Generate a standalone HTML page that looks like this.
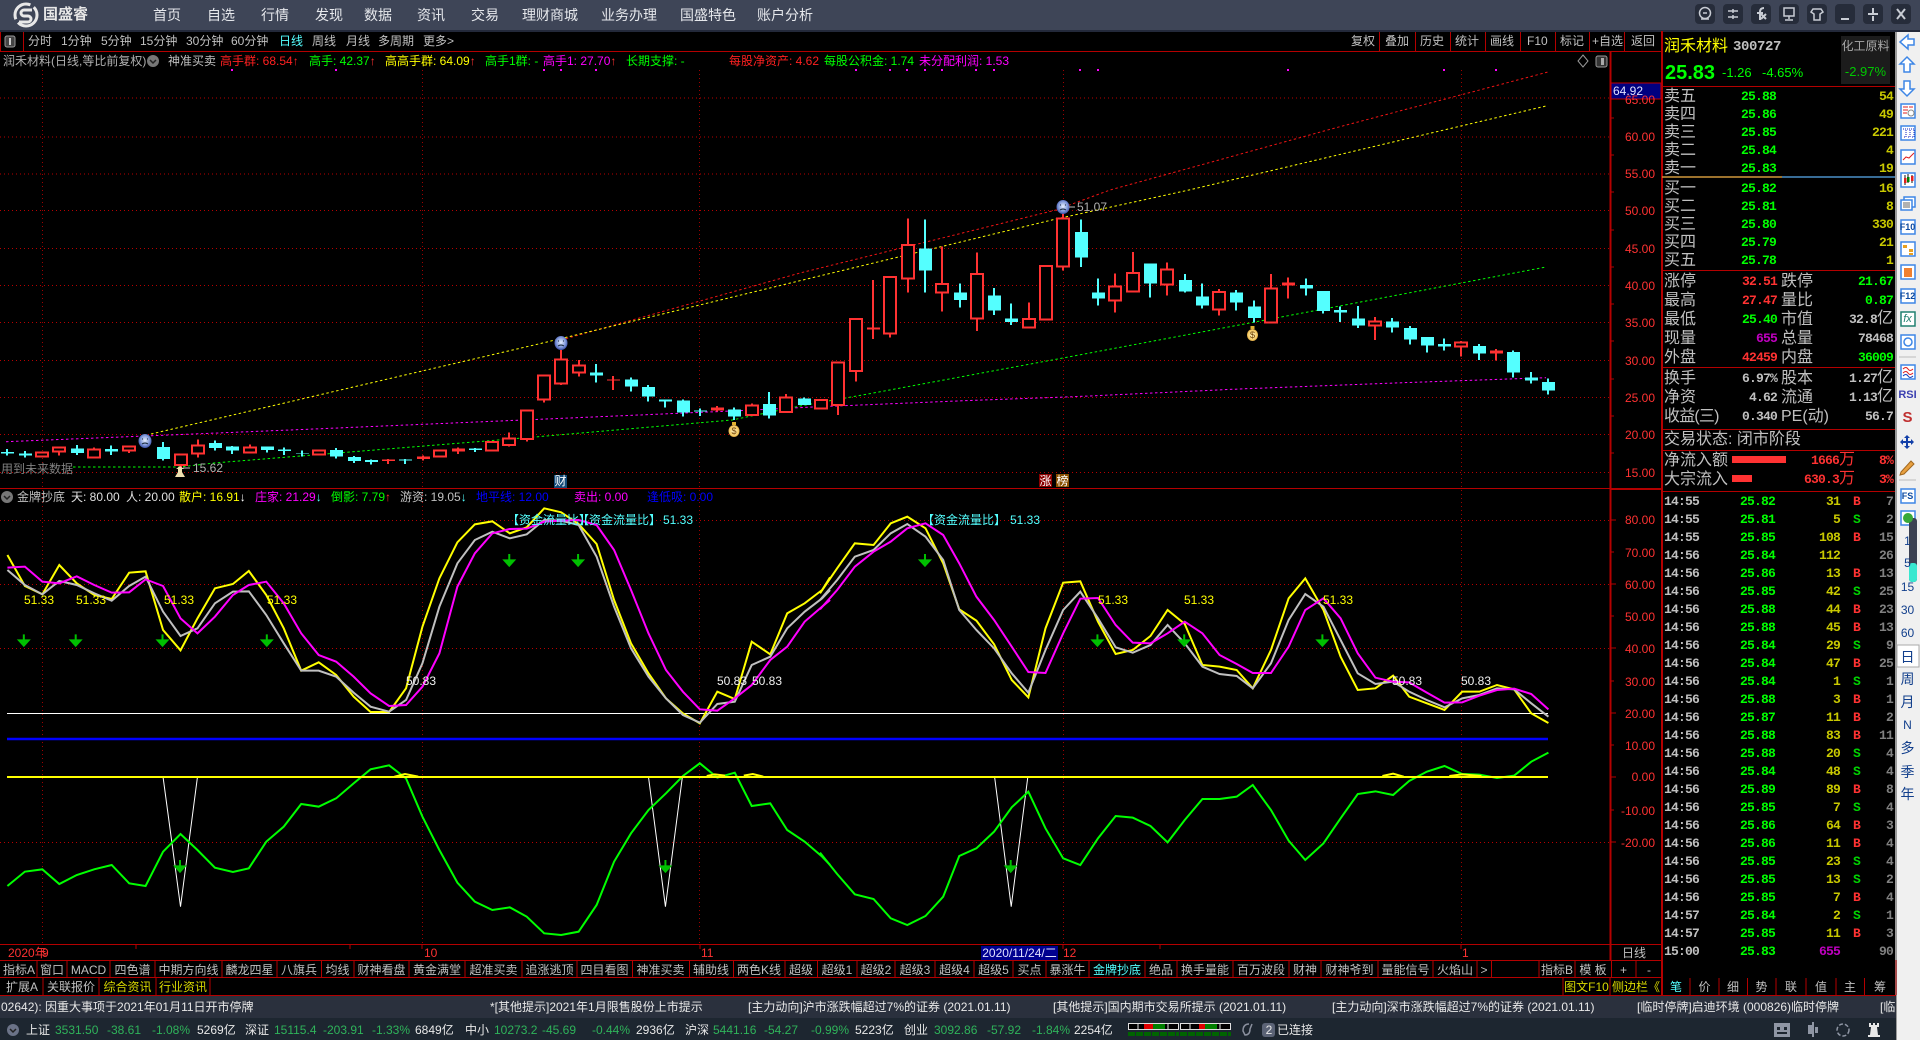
<!DOCTYPE html>
<html lang="zh"><head><meta charset="utf-8"><title>国盛睿</title>
<style>
html,body{margin:0;padding:0;background:#000;width:1920px;height:1040px;overflow:hidden}
body{position:relative;font:12px/16px "Liberation Sans","WenQuanYi Zen Hei","Noto Sans CJK SC",sans-serif;color:#c0c0c0}
svg{position:absolute;left:0;top:0}
.v *{vector-effect:non-scaling-stroke}
#r span{position:absolute;white-space:nowrap;display:block}
.m span{font-size:14px;color:#e6e8ec;top:7px}
.tb span{top:33px}
.ir span,.id span{top:53px}
.id span{top:489px}
.a span{color:#ff3232;right:265px;letter-spacing:0}
.l span{font-size:12px}
.t span{text-align:center;height:16px;line-height:16px}
.t1 span{top:962px}.t2 span{top:979px}
.tk span{top:999px;color:#e8e8e8}
.st span{top:1022px;color:#e8e8e8}
.st .g{color:#2fb35a}
.p,.k{position:absolute;left:0;top:1px;width:1920px;height:1039px}
.p span{font-family:"Liberation Mono","WenQuanYi Zen Hei",monospace;font-weight:700;font-size:13px;letter-spacing:-.8px;line-height:18px}
.p .c{font:16px/18px "Liberation Sans","WenQuanYi Zen Hei","Noto Sans CJK SC",sans-serif;color:#c0c0c0;letter-spacing:0;left:1664px}
.p .n{left:1741px;color:#0f0}
.p .y{right:27px;color:#c8c800}
.p .w{color:#c0c0c0}
.p .re{color:#ff3232}.p .gr{color:#0f0}
.p small{font:16px/0 "Liberation Sans","WenQuanYi Zen Hei",sans-serif;letter-spacing:0}
.k span{font-family:"Liberation Mono",monospace;font-weight:700;font-size:13px;letter-spacing:-.8px;line-height:18px}
.k .a1{left:1664px;color:#c0c0c0}
.k .a2{left:1740px;color:#0f0}
.k .a3{right:80px;color:#c8c800}
.k .a4{left:1853px;color:#ff3232}
.k .a5{left:1853px;color:#00d400}
.k .a6{right:27px;color:#808080}
.sd span{color:#123f8c;width:25px;text-align:center;left:1895px;font-size:14px}
</style></head>
<body>
<svg width="1920" height="1040" viewBox="0 0 1920 1040">
<defs>
<radialGradient id="sm" cx="50%" cy="45%" r="60%"><stop offset="0" stop-color="#e8f0ff"/><stop offset=".6" stop-color="#7e96d8"/><stop offset="1" stop-color="#2a3f9c"/></radialGradient>
<radialGradient id="mb" cx="50%" cy="50%" r="60%"><stop offset="0" stop-color="#fff6c8"/><stop offset=".7" stop-color="#f4c860"/><stop offset="1" stop-color="#a06010"/></radialGradient>
</defs>
<!-- chrome -->
<rect width="1920" height="30" fill="#3e4557"/>
<rect y="30" width="1920" height="2" fill="#23293a"/>
<rect x="1895" y="32" width="25" height="1008" fill="#f0f0f0"/>
<rect x="1895" y="32" width="2" height="1008" fill="#9a9a9a"/>
<rect y="995" width="1896" height="23" fill="#2a303d"/>
<rect y="1018" width="1896" height="22" fill="#1d2630"/>
<!-- grid -->
<path d="M0 98H1610M0 137H1610M0 174H1610M0 210.500H1610M0 248.500H1610M0 285.500H1610M0 322.500H1610M0 360.500H1610M0 397.500H1610M0 434.500H1610M0 472.500H1610M0 520.500H1610M0 584.500H1610M0 648.500H1610M0 842.500H1610" stroke="#b80000" stroke-dasharray="1 3" fill="none"/>
<path d="M42.500 70V945M422.500 70V945M699.500 70V945M1063.500 70V945M1461.500 70V945" stroke="#a00000" stroke-dasharray="1 3" fill="none"/>
<!-- dotted overlays -->
<g fill="none" stroke-width="1" stroke-dasharray="2.500 2.500">
<path d="M561 340L800 273L1056 210L1110 190L1335 128L1548 72" stroke="#f01414"/>
<path d="M151 434L544 342.700L800 280.700L1056 219L1189 190L1546 106" stroke="#ff0"/>
<path d="M73 467L180 467L214 463L523 438L732 420L800 406L868 394L1063 358L1239 325L1546 267" stroke="#0f0"/>
<path d="M6 441.700L145 436L314 429L523 420L732 411L820 406.700L964 400.700L1074 396.700L1239 389L1403 382.700L1546 377.700" stroke="#f0f"/>
</g>
<!-- candles left -->
<g class="v" transform="translate(0,340) scale(1,.33333)" shape-rendering="crispEdges">
<path fill="none" stroke="#ff3232" stroke-width="2" d="M42 337V353M59 322V347M94 322V353M129 318V339M181 341V385M198 298V352M250 313V340M319 330V345M388 357V372M423 347V362M440 330V352M458 323V342M492 304V335M509 277V320M527 212V305M544 107V188M561 30V135M579 60V110M613 108V150M717 198V215M752 190V228M786 162V218M821 178V205"/>
<path fill="#000" stroke="#ff3232" stroke-width="2" d="M36 338h12v12h-12zM53 322h12v13h-12zM88 328h12v25h-12zM123 320h12v12h-12zM175 343h12v32h-12zM192 317h12v24h-12zM244 323h12v15h-12zM313 332h12v12h-12zM434 332h12v18h-12zM486 306h12v26h-12zM503 296h12v19h-12zM521 212h12v85h-12zM538 107h12v71h-12zM555 58h12v72h-12zM573 77h12v20h-12zM746 197h12v28h-12zM780 173h12v43h-12zM815 180h12v25h-12z"/>
<path fill="#ff3232" d="M382 358h13v5h-13zM417 349h13v8h-13zM452 325h13v10h-13zM607 118h13v4h-13zM711 202h13v10h-13z"/>
<path fill="none" stroke="#54ffff" stroke-width="2" d="M7 327V347M25 333V352M77 315V345M111 316V345M163 306V362M215 301V332M232 318V342M267 319V338M284 322V345M302 331V350M336 324V356M354 348V369M371 358V374M405 357V372M475 324V336M596 72V128M631 112V155M648 135V185M665 178V203M683 178V230M700 205V228M734 202V240M769 156V235M804 173V195"/>
<path fill="#54ffff" d="M1 336h13v5h-13zM19 341h13v5h-13zM71 325h13v14h-13zM105 327h13v8h-13zM157 321h13v36h-13zM209 309h13v15h-13zM226 319h13v12h-13zM261 320h13v10h-13zM278 328h13v5h-13zM296 339h13v2h-13zM330 330h13v20h-13zM348 351h13v12h-13zM365 360h13v6h-13zM399 358h13v4h-13zM469 325h13v5h-13zM590 97h13v10h-13zM625 118h13v22h-13zM642 141h13v29h-13zM659 178h13v7h-13zM677 181h13v37h-13zM694 212h13v3h-13zM728 208h13v22h-13zM763 192h13v35h-13zM798 175h13v20h-13z"/>
</g>
<!-- candles right -->
<g class="v" transform="translate(0,190) scale(1,.33333)" shape-rendering="crispEdges">
<path fill="none" stroke="#ff3232" stroke-width="2" d="M838 518V675M856 385V575M873 270V447M890 260V443M908 85V308M942 170V365M977 187V423M1029 337V415M1063 70V242M1115 250V368M1133 186V305M1167 217V317M1219 297V377M1271 252V397M1288 262V326M1375 381V450M1461 453V500M1496 477V512"/>
<path fill="#000" stroke="#ff3232" stroke-width="2" d="M832 518h12v127h-12zM850 387h12v156h-12zM884 261h12v169h-12zM902 165h12v100h-12zM936 282h12v25h-12zM971 252h12v133h-12zM1023 387h12v25h-12zM1040 228h12v160h-12zM1057 85h12v145h-12zM1109 290h12v41h-12zM1127 249h12v55h-12zM1161 239h12v45h-12zM1213 306h12v52h-12zM1265 296h12v101h-12zM1369 395h12v11h-12zM1455 458h12v11h-12z"/>
<path fill="#ff3232" d="M867 412h13v6h-13zM1282 277h13v10h-13zM1490 481h13v10h-13z"/>
<path fill="none" stroke="#54ffff" stroke-width="2" d="M925 88V308M960 280V353M994 294V375M1011 340V405M1081 88V231M1098 265V347M1150 220V323M1185 252V308M1202 280V356M1236 300V362M1254 331V397M1306 265V317M1323 303V371M1340 350V396M1358 348V414M1392 384V428M1410 408V464M1427 441V488M1444 445V482M1479 462V510M1513 481V563M1531 546V581M1548 565V614"/>
<path fill="#54ffff" d="M919 175h13v67h-13zM954 307h13v23h-13zM988 316h13v46h-13zM1005 385h13v11h-13zM1075 126h13v77h-13zM1092 307h13v19h-13zM1144 220h13v61h-13zM1179 270h13v35h-13zM1196 319h13v28h-13zM1230 307h13v31h-13zM1248 349h13v35h-13zM1300 285h13v11h-13zM1317 303h13v60h-13zM1334 360h13v8h-13zM1352 385h13v22h-13zM1386 394h13v19h-13zM1404 414h13v35h-13zM1421 441h13v26h-13zM1438 462h13v8h-13zM1473 468h13v23h-13zM1507 486h13v62h-13zM1525 563h13v8h-13zM1542 576h13v26h-13z"/>
</g>
<!-- markers -->
<ellipse cx="145" cy="441" rx="6.500" ry="7" fill="url(#sm)"/><path d="M142 439h1M147 439h1M142 444q3-2 6 0" stroke="#123" fill="none"/>
<ellipse cx="561" cy="343" rx="6.500" ry="7" fill="url(#sm)"/><path d="M558 341h1M563 341h1M558 346q3-2 6 0" stroke="#123" fill="none"/>
<ellipse cx="1063" cy="207" rx="6.500" ry="7" fill="url(#sm)"/><path d="M1060 205h1M1065 205h1M1060 210q3-2 6 0" stroke="#123" fill="none"/>
<ellipse cx="734" cy="431" rx="5.500" ry="6" fill="url(#mb)"/><rect x="732" y="422" width="4" height="3" fill="#e0b030"/><text x="734" y="434" font-size="9" text-anchor="middle" fill="#704000" font-family="Liberation Sans">$</text>
<ellipse cx="1252.500" cy="335" rx="5.500" ry="6" fill="url(#mb)"/><rect x="1250.500" y="326" width="4" height="3" fill="#e0b030"/><text x="1252.500" y="338" font-size="9" text-anchor="middle" fill="#704000" font-family="Liberation Sans">$</text>
<path d="M175 477h10l-3-5v-3h2l-4-3-4 3h2v3z" fill="#f0e0b0"/>
<path d="M183 468h7" stroke="#c0c0c0"/>
<path d="M1069 207h6" stroke="#c0c0c0"/>
<rect x="554" y="475" width="13" height="13" fill="#134a78"/>
<rect x="1039" y="474" width="13" height="13" fill="#8a0000"/>
<rect x="1056" y="474" width="13" height="13" fill="#8a5000"/>
<!-- indicator lines -->
<path d="M7 713.500H1548" stroke="#fff"/>
<path d="M7 739H1548" stroke="#0000ff" stroke-width="2.500"/>
<g class="v" transform="translate(0,500) scale(.52938,.33333)" fill="none">
<path stroke="#fff" d="M308 831L341 1220L373 831M1225 831L1257 1220L1289 831"/>
<path stroke="#0f0" stroke-width="2" d="M14 1158L47 1115L80 1108L112 1152L145 1125L178 1108L211 1095L244 1150L275 1158L308 1055L341 1002L373 1050L406 1103L440 1116L470 1105L503 1025L536 980L569 912L602 920L635 895L668 850L700 808L735 796L767 835L798 950L830 1050L864 1148L897 1205L930 1230L963 1222L995 1250L1028 1300L1060 1305L1093 1295L1127 1215L1160 1085L1192 1000L1225 930L1258 880L1290 828L1322 790L1355 833L1388 818L1420 918L1455 910L1487 990L1520 1025L1553 1070L1568 1095"/>
<path stroke="#ff0" stroke-width="2" d="M14 165L47 258L80 283L112 195L145 250L178 285L211 297L244 218L275 214L308 390L341 451L373 355L406 265L440 252L470 213L503 285L536 385L569 512L602 487L635 525L668 590L700 636L735 636L767 565L798 380L830 235L864 127L897 73L930 64L963 100L995 82L1028 25L1060 37L1093 72L1127 132L1160 300L1192 430L1225 520L1258 595L1290 640L1322 670L1355 575L1388 597L1420 425L1455 463L1487 340L1520 310L1553 270L1568 232"/>
<path stroke="#c0c0c0" stroke-width="2" d="M14 210L47 255L80 283L112 243L145 255L178 280L211 302L244 258L275 230L308 335L341 408L373 385L406 310L440 275L470 274L503 345L536 430L569 512L602 512L635 530L668 578L700 620L735 635L767 600L798 490L830 320L864 190L897 120L930 95L963 115L995 103L1028 60L1060 62L1093 75L1127 170L1160 320L1192 445L1225 530L1258 595L1290 645L1322 668L1355 612L1388 605L1420 495L1455 470L1487 385L1520 335L1553 295L1568 270"/>
<path stroke="#f0f" stroke-width="2" d="M14 203L47 200L80 245L112 250L145 229L178 255L211 278L244 277L275 238L308 258L341 355L373 400L406 350L440 285L470 255L503 245L536 310L569 400L602 465L635 485L668 530L700 580L735 618L767 615L798 560L830 460L864 260L897 160L930 100L963 87L995 86L1028 65L1060 62L1093 60L1127 75L1160 150L1192 270L1225 400L1258 510L1290 575L1322 628L1355 632L1388 595L1420 555L1455 480L1487 440L1520 365L1553 320L1568 300"/>
<path stroke="#ff0" stroke-width="2" d="M745 830L765 822L790 830M1335 828L1350 823L1370 827M1405 827L1422 822L1442 830"/>
<path fill="#00c000" stroke="#00c000" stroke-width="2" d="M45 403V420M36 421H54L45 437ZM143 403V420M134 421H152L143 437ZM307 403V420M298 421H316L307 437ZM504 403V420M495 421H513L504 437ZM962 162V180M953 181H971L962 197ZM1092 162V180M1083 181H1101L1092 197ZM340 1080V1098M331 1099H349L340 1115ZM1257 1080V1098M1248 1099H1266L1257 1115Z"/>
</g>
<g class="v" transform="translate(820,500) scale(.53560,.33333)" fill="none">
<path stroke="#fff" d="M326 831L357 1220L388 831"/>
<path stroke="#0f0" stroke-width="2" d="M0 1058L32 1122L65 1183L100 1197L132 1255L163 1275L197 1248L230 1190L260 1068L292 1045L325 995L358 922L389 875L421 985L454 1075L486 1095L519 1015L552 948L584 953L617 978L649 1027L681 960L714 897L746 897L778 890L808 855L842 930L875 1022L906 1080L940 1030L972 955L1004 882L1037 874L1070 885L1100 843L1133 815L1166 798L1199 822L1231 824L1264 834L1296 827L1328 785L1360 758"/>
<path stroke="#ff0" stroke-width="2" d="M0 280L32 205L65 130L100 135L132 70L163 50L197 85L230 190L260 328L292 362L325 433L358 540L389 592L421 385L454 248L486 244L519 365L552 462L584 450L617 408L649 330L681 372L714 495L746 500L778 510L808 565L842 450L875 295L906 235L940 330L972 470L1004 570L1037 565L1070 527L1100 590L1133 610L1166 630L1199 575L1231 575L1264 555L1296 568L1328 640L1360 669"/>
<path stroke="#c0c0c0" stroke-width="2" d="M0 300L32 240L65 170L100 150L132 100L163 72L197 110L230 180L260 330L292 390L325 445L358 520L389 578L421 450L454 330L486 275L519 355L552 442L584 458L617 435L649 375L681 430L714 500L746 522L778 528L808 565L842 490L875 360L906 282L940 320L972 420L1004 520L1037 552L1070 545L1100 575L1133 600L1166 622L1199 595L1231 585L1264 565L1296 568L1328 610L1360 650"/>
<path stroke="#f0f" stroke-width="2" d="M0 328L32 270L65 200L100 155L132 125L163 85L197 70L230 105L260 190L292 290L325 360L358 440L389 516L421 519L454 400L486 296L519 294L552 375L584 428L617 430L649 400L681 365L714 400L746 465L778 492L808 519L842 519L875 440L906 330L940 295L972 355L1004 460L1037 533L1070 545L1100 547L1133 578L1166 608L1199 607L1231 587L1264 570L1296 566L1328 582L1360 628"/>
<path stroke="#ff0" stroke-width="2" d="M1050 828L1070 821L1090 830M1175 828L1199 823L1235 828"/>
<path fill="#00c000" stroke="#00c000" stroke-width="2" d="M196 162V180M187 181H205L196 197ZM518 403V420M509 421H527L518 437ZM680 403V420M671 421H689L680 437ZM938 403V420M929 421H947L938 437ZM356 1080V1098M347 1099H365L356 1115Z"/>
</g>
<path d="M7 777H1548" stroke="#ff0" stroke-width="2"/>
<!-- red frame -->
<g stroke="#b40000" fill="none">
<path d="M0 51.500H1662M0 488.500H1610M0 944.500H1662M0 960.500H1662M0 977.500H1662M0 995.500H1896" />
<path d="M1610.500 51V960M1662 31V995" stroke-width="2"/>
<path d="M1610 489H1661" stroke-width="2"/>
<path d="M1662 86.500H1895M1662 270.500H1895M1662 367.500H1895M1662 429.500H1895M1662 450.500H1895M1662 491.500H1895"/>
<path d="M0.500 32V51M23.500 32V51" />
<path d="M1610 118H1614M1610 155H1614M1610 192H1614M1610 230H1614M1610 267H1614M1610 304H1614M1610 341H1614M1610 379H1614M1610 416H1614M1610 453H1614M1610 552H1614M1610 616H1614M1610 681H1614M1610 745H1614M1610 810H1614M1610 520H1616M1610 584H1616M1610 648H1616M1610 713H1616M1610 777H1616M1610 842H1616"/>
<path d="M1379.500 32V51M1415.500 32V51M1450.500 32V51M1485.500 32V51M1520.500 32V51M1555.500 32V51M1589.500 32V51M1624.500 32V51" />
<path d="M37 961V977M67 961V977M110 961V977M155 961V977M222 961V977M277 961V977M321.500 961V977M354 961V977M409 961V977M465 961V977M522 961V977M577 961V977M632.500 961V977M689.500 961V977M733.500 961V977M785 961V977M817.500 961V977M857 961V977M895 961V977M935 961V977M974 961V977M1013 961V977M1046 961V977M1089 961V977M1145 961V977M1177 961V977M1233 961V977M1289 961V977M1321 961V977M1378 961V977M1433 961V977M1477 961V977M1491.500 961V977M1539 961V977M1575 961V977M1611.500 961V977M1636 961V977"/>
<path d="M43 978V995M99 978V995M156 978V995M210 978V995M1563 978V995M1610 978V995M1690 978V995M1719 978V995M1747.500 978V995M1776 978V995M1806 978V995M1836 978V995M1864.500 978V995M1896 960V995"/>
<path d="M136 945V949M350 945V949M422 945V949M700 945V949M1063 945V949M1160 945V949M1461 945V949"/>
</g>
<rect x="1611" y="83" width="50" height="16" fill="#000080" stroke="#c00000"/>
<rect x="981" y="946" width="77" height="14" fill="#000090"/>
<path d="M1662 177H1782" stroke="#d0983c" stroke-width="1.500"/><path d="M1782 177H1895" stroke="#4a8fc8" stroke-width="1.500"/>
<rect x="1841" y="36" width="49" height="48" fill="#1c1c1c"/>
<rect x="1732" y="456" width="54" height="7" fill="#ff3232"/>
<rect x="1732" y="475" width="20" height="7" fill="#ff3232"/>
<!-- toolbar left icon / chart icons -->
<rect x="5" y="36" width="10" height="11" rx="2" fill="#444" stroke="#999"/><rect x="9" y="38" width="2" height="7" fill="#ccc"/>
<path d="M1583 55l5 6-5 6-5-6z" fill="none" stroke="#999"/>
<rect x="1596" y="56" width="11" height="11" rx="2" fill="#333" stroke="#999"/><rect x="1601" y="58" width="3" height="7" fill="#aaa"/>
<circle cx="153" cy="61" r="6" fill="#777"/><path d="M150 60l3 3 3-3" stroke="#222" stroke-width="1.500" fill="none"/>
<circle cx="7" cy="497" r="6" fill="#777"/><path d="M4 496l3 3 3-3" stroke="#222" stroke-width="1.500" fill="none"/>
<path fill="#f0f" d="M231 69h2v2h-2zM335 69h2v2h-2zM543 69h2v2h-2zM560 69h2v2h-2zM595 69h2v2h-2zM855 69h2v2h-2zM889 69h2v2h-2zM906 69h2v2h-2zM924 69h2v2h-2zM941 69h2v2h-2zM975 69h2v2h-2zM993 69h2v2h-2zM1079 69h2v2h-2zM1097 69h2v2h-2zM1287 69h2v2h-2zM1443 69h2v2h-2zM1495 69h2v2h-2z"/>
<!-- logo -->
<circle cx="26" cy="15" r="11" fill="none" stroke="#e8e8e8" stroke-width="3" stroke-dasharray="26 4"/>
<path d="M32 10H24a3 3 0 0 0 0 6h4a3 3 0 0 1 0 6H19" fill="none" stroke="#e8e8e8" stroke-width="3"/>
<!-- window buttons -->
<g fill="#262c3a">
<rect x="1695" y="4" width="20" height="20" rx="4"/><rect x="1723" y="4" width="20" height="20" rx="4"/><rect x="1751" y="4" width="20" height="20" rx="4"/><rect x="1779" y="4" width="20" height="20" rx="4"/><rect x="1807" y="4" width="20" height="20" rx="4"/><rect x="1835" y="4" width="20" height="20" rx="4"/><rect x="1863" y="4" width="20" height="20" rx="4"/><rect x="1891" y="4" width="20" height="20" rx="4"/>
</g>
<g fill="none" stroke="#c8ccd4" stroke-width="1.500">
<circle cx="1705" cy="13" r="5.500"/><path d="M1703 13h4M1701 19h8"/>
<path d="M1728 11h10M1733 9v4M1728 17h10M1733 15v4"/>
<path d="M1764 8q-4 0-4 4v8M1757 13h6M1761 14l5 5M1766 14l-5 5" stroke-width="2"/>
<rect x="1784" y="8" width="10" height="8"/><path d="M1789 16v3M1785 20h8"/>
<path d="M1813 9h8l2 3-3 2v6h-6v-6l-3-2z"/>
<path d="M1841 19h8" stroke-width="2"/>
<path d="M1873 8v6M1868 14h5M1873 16v5M1873 14h5" stroke-width="2"/>
<path d="M1897 9l8 10M1905 9l-8 10" stroke-width="2"/>
</g>
<!-- status boxes -->
<g stroke="#e0e0e0" fill="#000">
<rect x="1128.500" y="1023.500" width="50" height="6"/><rect x="1180.500" y="1023.500" width="50" height="6"/>
</g>
<path d="M1138 1023v7M1148 1023v7M1158 1023v7M1168 1023v7M1190 1023v7M1200 1023v7M1210 1023v7M1220 1023v7" stroke="#e0e0e0"/>
<rect x="1144" y="1024" width="9" height="5" fill="#e00000"/><rect x="1153" y="1024" width="12" height="5" fill="#008000"/>
<rect x="1199" y="1024" width="6" height="5" fill="#e00000"/><rect x="1205" y="1024" width="12" height="5" fill="#008000"/>
<path d="M1128 1034H1179M1180 1034H1231" stroke="#006400" stroke-width="4" stroke-dasharray="7 1"/>
<circle cx="13" cy="1030" r="6" fill="#6b7388"/><path d="M10 1029l3 3 3-3" stroke="#222" stroke-width="1.500" fill="none"/>
<path d="M1249 1024q-6 0-6 7l2 4q5 0 5-6l2-5" fill="none" stroke="#8a909e" stroke-width="1.500"/>
<rect x="1262" y="1023" width="13" height="14" rx="3" fill="#5b6376"/>
<g fill="#8f96a4">
<path d="M1774 1023h16v14h-16zM1777 1027h3v3h-3zM1784 1027h3v3h-3zM1777 1032h10v2h-10z" fill-rule="evenodd"/>
<path d="M1808 1025h4v-3h2v15h-2v-3h-4zM1815 1027h3v6h-3z"/>
</g>
<circle cx="1843" cy="1030" r="6" fill="none" stroke="#8f96a4" stroke-width="1.500" stroke-dasharray="4 2"/>
<path d="M1869 1023h2v2h2v-2h2v2h2v-2h2v4h-2l1 8h2v2h-12v-2h2l1-8h-2z" fill="#e8e8e8"/>
<!-- sidebar icons -->
<g fill="#fff" stroke="#3d86e6" stroke-width="1.500">
<path d="M1900 42l8-7v4h6v6h-6v4z"/>
<path d="M1907 57l7 7h-4v8h-6v-8h-4z"/>
<path d="M1904 81h6v8h4l-7 7-7-7h4z"/>
<rect x="1901" y="104" width="14" height="14"/>
<rect x="1901" y="126" width="14" height="14"/>
<rect x="1901" y="150" width="14" height="14"/>
<rect x="1901" y="173" width="14" height="14"/>
<rect x="1904" y="197" width="11" height="10"/><rect x="1901" y="200" width="11" height="10"/>
<rect x="1901" y="220" width="14" height="14"/>
<rect x="1901" y="242" width="14" height="14"/>
<rect x="1901" y="265" width="14" height="14"/>
<rect x="1901" y="289" width="14" height="14"/>
<rect x="1901" y="312" width="14" height="14" stroke="#208070"/>
<rect x="1901" y="335" width="14" height="14"/>
<circle cx="1908" cy="342" r="4" fill="none" stroke="#3d86e6"/>
<rect x="1901" y="365" width="14" height="14"/>
<rect x="1901" y="489" width="14" height="14"/>
<rect x="1901" y="511" width="14" height="14"/>
</g>
<path d="M1903 107h5M1903 110h5M1903 113h4M1909 107h4" stroke="#e02020"/><circle cx="1911" cy="113" r="3" fill="none" stroke="#888"/>
<path d="M1903 129h3v8h-3M1907 129h3v8h-3M1911 129h3v8h-3" stroke="#1020c0" fill="none" stroke-dasharray="1 1"/>
<path d="M1903 160l3-3 3 1 5-5" stroke="#e02020" fill="none"/>
<path d="M1905 175v10M1908 174v9M1912 175v8" stroke="#111"/><rect x="1904" y="178" width="2.500" height="5" fill="#e02020"/><rect x="1907" y="177" width="2.500" height="5" fill="#008000"/><rect x="1911" y="176" width="2.500" height="5" fill="#e02020"/>
<path d="M1903 203h7M1903 205h7M1903 207h7" stroke="#666"/>
<rect x="1903" y="245" width="4" height="3" fill="#e8a020"/><rect x="1909" y="249" width="4" height="3" fill="#e8a020"/><rect x="1909" y="253" width="4" height="2" fill="#e8a020"/>
<rect x="1904" y="268" width="8" height="9" fill="#f08030"/>
<path d="M1903 369q3-3 5 0t5 0M1903 373q3-3 5 0t5 0" stroke="#e02020" fill="none"/><path d="M1903 376q3-3 5 0t5 0" stroke="#1040c0" fill="none"/>
<path d="M1899 357h17M1899 480h17" stroke="#bbb"/>
<path d="M1907 435l3 3h-2v3h3v-2l3 3-3 3v-2h-3v3h2l-3 3-3-3h2v-3h-3v2l-3-3 3-3v2h3v-3h-2z" fill="#123fa8"/>
<path d="M1901 472l10-11 3 3-10 10-4 1z" fill="#e8a040" stroke="#a06820"/>
<rect x="1909" y="518" width="8" height="64" rx="3" fill="#3b4152"/>
<rect x="1909" y="563" width="8" height="19" rx="3" fill="#38e8d0"/>
<circle cx="1908" cy="518" r="5" fill="#38a838"/>
<rect x="1897" y="645" width="22" height="22" fill="#fff" stroke="#aaa"/>
</svg>
<div id="r">
<div class="m">
<span style="left:43px;top:7px;font-weight:700;font-size:15px;color:#e8e8e8">国盛睿</span>
<span style="left:153px">首页</span><span style="left:207px">自选</span><span style="left:261px">行情</span><span style="left:315px">发现</span><span style="left:364px">数据</span><span style="left:417px">资讯</span><span style="left:471px">交易</span><span style="left:522px">理财商城</span><span style="left:601px">业务办理</span><span style="left:680px">国盛特色</span><span style="left:757px">账户分析</span>
</div>
<div class="tb">
<span style="left:28px">分时</span><span style="left:61px">1分钟</span><span style="left:101px">5分钟</span><span style="left:140px">15分钟</span><span style="left:186px">30分钟</span><span style="left:231px">60分钟</span><span style="left:279px;color:#54ffff">日线</span><span style="left:312px">周线</span><span style="left:346px">月线</span><span style="left:378px">多周期</span><span style="left:423px">更多&gt;</span>
<span style="left:1351px">复权</span><span style="left:1385px">叠加</span><span style="left:1420px">历史</span><span style="left:1455px">统计</span><span style="left:1490px">画线</span><span style="left:1527px">F10</span><span style="left:1560px">标记</span><span style="left:1592px">+自选</span><span style="left:1631px">返回</span>
</div>
<div class="ir">
<span style="left:3px;color:#b0b0b0">润禾材料(日线,等比前复权)</span><span style="left:168px">神准买卖</span>
<span style="left:220px;color:#ff2020">高手群: 68.54↑</span><span style="left:309px;color:#0f0">高手: 42.37<b style="color:#ff3232">↑</b></span><span style="left:385px;color:#ff0">高高手群: 64.09<b style="color:#ff3232">↑</b></span><span style="left:485px;color:#0f0">高手1群: -</span><span style="left:543px;color:#f0f">高手1: 27.70<b style="color:#ff3232">↑</b></span><span style="left:626px;color:#0f0">长期支撑: -</span>
<span style="left:729px;color:#ff2020">每股净资产: 4.62</span><span style="left:824px;color:#0f0">每股公积金: 1.74</span><span style="left:919px;color:#f0f">未分配利润: 1.53</span>
</div>
<div class="id">
<span style="left:17px">金牌抄底</span><span style="left:71px;color:#e0e0e0">天: 80.00</span><span style="left:126px;color:#e0e0e0">人: 20.00</span>
<span style="left:179px;color:#ff0">散户: 16.91<b style="color:#fff">↓</b></span><span style="left:255px;color:#f0f">庄家: 21.29<b style="color:#54ffff">↓</b></span><span style="left:331px;color:#0f0">倒影: 7.79<b style="color:#ff3232">↑</b></span><span style="left:400px;color:#c0c0c0">游资: 19.05<b style="color:#54ffff">↓</b></span><span style="left:476px;color:#0000ff">地平线: 12.00</span><span style="left:574px;color:#f0f">卖出: 0.00</span><span style="left:647px;color:#0000ff">逢低吸: 0.00</span>
</div>
<div class="l">
<span style="left:1px;top:461px;color:#808080">用到未来数据</span>
<span style="left:193px;top:460px;color:#b0b0b0">15.62</span>
<span style="left:1077px;top:199px;color:#b0b0b0">51.07</span>
<span style="left:554px;top:473px;color:#fff;width:13px;text-align:center">财</span>
<span style="left:1039px;top:473px;color:#fff;width:13px;text-align:center">涨</span>
<span style="left:1056px;top:473px;color:#fff;width:13px;text-align:center">榜</span>
<span style="left:1613px;top:83px;color:#e0e0ff">64.92</span>
<span style="left:24px;top:592px;color:#ff0">51.33</span><span style="left:76px;top:592px;color:#ff0">51.33</span><span style="left:164px;top:592px;color:#ff0">51.33</span><span style="left:267px;top:592px;color:#ff0">51.33</span><span style="left:1098px;top:592px;color:#ff0">51.33</span><span style="left:1184px;top:592px;color:#ff0">51.33</span><span style="left:1323px;top:592px;color:#ff0">51.33</span>
<span style="left:406px;top:673px;color:#f0f0f0">50.83</span><span style="left:717px;top:673px;color:#f0f0f0">50.83</span><span style="left:752px;top:673px;color:#f0f0f0">50.83</span><span style="left:1392px;top:673px;color:#f0f0f0">50.83</span><span style="left:1461px;top:673px;color:#f0f0f0">50.83</span>
<span style="left:507px;top:512px;color:#54ffff">【资金流量比】</span><span style="left:577px;top:512px;color:#54ffff">【资金流量比】</span><span style="left:663px;top:512px;color:#54ffff">51.33</span><span style="left:922px;top:512px;color:#54ffff">【资金流量比】</span><span style="left:1010px;top:512px;color:#54ffff">51.33</span>
</div>
<div class="a">
<span style="top:92px">65.00</span><span style="top:129px">60.00</span><span style="top:166px">55.00</span><span style="top:203px">50.00</span><span style="top:241px">45.00</span><span style="top:278px">40.00</span><span style="top:315px">35.00</span><span style="top:353px">30.00</span><span style="top:390px">25.00</span><span style="top:427px">20.00</span><span style="top:465px">15.00</span>
<span style="top:512px">80.00</span><span style="top:545px">70.00</span><span style="top:577px">60.00</span><span style="top:609px">50.00</span><span style="top:641px">40.00</span><span style="top:674px">30.00</span><span style="top:706px">20.00</span><span style="top:738px">10.00</span><span style="top:769px">0.00</span><span style="top:803px">-10.00</span><span style="top:835px">-20.00</span>
</div>
<div class="l" style="color:#ff3232">
<span style="left:8px;top:945px;color:#ff3232">2020年</span><span style="left:42px;top:945px;color:#ff3232">9</span><span style="left:424px;top:945px;color:#ff3232">10</span><span style="left:701px;top:945px;color:#ff3232">11</span><span style="left:1063px;top:945px;color:#ff3232">12</span><span style="left:1462px;top:945px;color:#ff3232">1</span>
<span style="left:981px;top:945px;color:#e0e0ff;width:77px;text-align:center">2020/11/24/二</span>
<span style="left:1622px;top:945px;color:#c0c0c0">日线</span>
</div>
<div class="t t1">
<span style="left:1px;width:36px">指标A</span><span style="left:37px;width:30px">窗口</span><span style="left:67px;width:43px">MACD</span><span style="left:110px;width:45px">四色谱</span><span style="left:155px;width:67px">中期方向线</span><span style="left:222px;width:55px">麟龙四星</span><span style="left:277px;width:44px">八旗兵</span><span style="left:321px;width:33px">均线</span><span style="left:354px;width:55px">财神看盘</span><span style="left:409px;width:56px">黄金满堂</span><span style="left:465px;width:57px">超准买卖</span><span style="left:522px;width:55px">追涨逃顶</span><span style="left:577px;width:55px">四目看图</span><span style="left:632px;width:57px">神准买卖</span><span style="left:689px;width:44px">辅助线</span><span style="left:733px;width:52px">两色K线</span><span style="left:785px;width:32px">超级</span><span style="left:817px;width:40px">超级1</span><span style="left:857px;width:38px">超级2</span><span style="left:895px;width:40px">超级3</span><span style="left:935px;width:39px">超级4</span><span style="left:974px;width:39px">超级5</span><span style="left:1013px;width:33px">买点</span><span style="left:1046px;width:43px">暴涨牛</span><span style="left:1089px;width:56px;color:#54ffff">金牌抄底</span><span style="left:1145px;width:32px">绝品</span><span style="left:1177px;width:56px">换手量能</span><span style="left:1233px;width:56px">百万波段</span><span style="left:1289px;width:32px">财神</span><span style="left:1321px;width:57px">财神爷到</span><span style="left:1378px;width:55px">量能信号</span><span style="left:1433px;width:44px">火焰山</span><span style="left:1477px;width:14px">&gt;</span><span style="left:1539px;width:36px">指标B</span><span style="left:1575px;width:36px">模 板</span><span style="left:1611px;width:25px">+</span><span style="left:1636px;width:26px">-</span>
</div>
<div class="t t2">
<span style="left:1px;width:42px">扩展A</span><span style="left:43px;width:56px">关联报价</span><span style="left:99px;width:57px;color:#d8d800">综合资讯</span><span style="left:156px;width:54px;color:#d8d800">行业资讯</span><span style="left:1563px;width:47px;color:#d8d800">图文F10</span><span style="left:1610px;width:52px;color:#d8d800">侧边栏《</span><span style="left:1662px;width:28px;color:#54ffff">笔</span><span style="left:1690px;width:29px">价</span><span style="left:1719px;width:28px">细</span><span style="left:1747px;width:29px">势</span><span style="left:1776px;width:30px">联</span><span style="left:1806px;width:30px">值</span><span style="left:1836px;width:28px">主</span><span style="left:1864px;width:32px">筹</span>
</div>
<div class="tk">
<span style="left:1px">02642): 因重大事项于2021年01月11日开市停牌</span><span style="left:490px">*[其他提示]2021年1月限售股份上市提示</span><span style="left:748px">[主力动向]沪市涨跌幅超过7%的证券 (2021.01.11)</span><span style="left:1053px">[其他提示]国内期市交易所提示 (2021.01.11)</span><span style="left:1332px">[主力动向]深市涨跌幅超过7%的证券 (2021.01.11)</span><span style="left:1637px">[临时停牌]启迪环境 (000826)临时停牌</span><span style="left:1880px">[临</span>
</div>
<div class="st">
<span style="left:26px">上证</span><span class="g" style="left:55px">3531.50</span><span class="g" style="left:107px">-38.61</span><span class="g" style="left:152px">-1.08%</span><span style="left:197px">5269亿</span>
<span style="left:245px">深证</span><span class="g" style="left:274px">15115.4</span><span class="g" style="left:323px">-203.91</span><span class="g" style="left:372px">-1.33%</span><span style="left:415px">6849亿</span>
<span style="left:465px">中小</span><span class="g" style="left:494px">10273.2</span><span class="g" style="left:542px">-45.69</span><span class="g" style="left:592px">-0.44%</span><span style="left:636px">2936亿</span>
<span style="left:685px">沪深</span><span class="g" style="left:713px">5441.16</span><span class="g" style="left:764px">-54.27</span><span class="g" style="left:811px">-0.99%</span><span style="left:855px">5223亿</span>
<span style="left:904px">创业</span><span class="g" style="left:934px">3092.86</span><span class="g" style="left:987px">-57.92</span><span class="g" style="left:1032px">-1.84%</span><span style="left:1074px">2254亿</span>
<span style="left:1265px;width:8px;text-align:center">2</span><span style="left:1277px">已连接</span>
</div>
<div class="p">
<span class="c" style="top:37px;color:#ff0">润禾材料</span><span style="left:1733px;top:37px;color:#c0c0c0;font-size:14px;letter-spacing:-.4px">300727</span>
<span style="left:1665px;top:60px;font:700 20px/24px 'Liberation Sans',sans-serif;letter-spacing:0;color:#0f0">25.83</span>
<span style="left:1722px;top:63px;font:13px/18px 'Liberation Sans',sans-serif;letter-spacing:0;color:#0f0">-1.26</span><span style="left:1762px;top:63px;font:13px/18px 'Liberation Sans',sans-serif;letter-spacing:0;color:#0f0">-4.65%</span>
<span style="left:1841px;top:37px;width:49px;text-align:center;font:12px/16px 'WenQuanYi Zen Hei',sans-serif;letter-spacing:0;color:#a8a8a8">化工原料</span>
<span style="left:1841px;top:62px;width:49px;text-align:center;font:13px/18px 'Liberation Sans',sans-serif;letter-spacing:0;color:#00c800">-2.97%</span>
<span class="c" style="top:87px">卖五</span><span class="n" style="top:87px">25.88</span><span class="y" style="top:87px">54</span>
<span class="c" style="top:105px">卖四</span><span class="n" style="top:105px">25.86</span><span class="y" style="top:105px">49</span>
<span class="c" style="top:123px">卖三</span><span class="n" style="top:123px">25.85</span><span class="y" style="top:123px">221</span>
<span class="c" style="top:141px">卖二</span><span class="n" style="top:141px">25.84</span><span class="y" style="top:141px">4</span>
<span class="c" style="top:159px">卖一</span><span class="n" style="top:159px">25.83</span><span class="y" style="top:159px">19</span>
<span class="c" style="top:179px">买一</span><span class="n" style="top:179px">25.82</span><span class="y" style="top:179px">16</span>
<span class="c" style="top:197px">买二</span><span class="n" style="top:197px">25.81</span><span class="y" style="top:197px">8</span>
<span class="c" style="top:215px">买三</span><span class="n" style="top:215px">25.80</span><span class="y" style="top:215px">330</span>
<span class="c" style="top:233px">买四</span><span class="n" style="top:233px">25.79</span><span class="y" style="top:233px">21</span>
<span class="c" style="top:251px">买五</span><span class="n" style="top:251px">25.78</span><span class="y" style="top:251px">1</span>
<span class="c" style="top:272px">涨停</span><span class="re" style="right:143px;top:272px">32.51</span><span class="c" style="top:272px;left:1781px">跌停</span><span class="gr" style="right:27px;top:272px">21.67</span>
<span class="c" style="top:291px">最高</span><span class="re" style="right:143px;top:291px">27.47</span><span class="c" style="top:291px;left:1781px">量比</span><span class="gr" style="right:27px;top:291px">0.87</span>
<span class="c" style="top:310px">最低</span><span class="gr" style="right:143px;top:310px">25.40</span><span class="c" style="top:310px;left:1781px">市值</span><span class="w" style="right:27px;top:310px">32.8<small>亿</small></span>
<span class="c" style="top:329px">现量</span><span style="right:143px;top:329px;color:#c000c0">655</span><span class="c" style="top:329px;left:1781px">总量</span><span class="w" style="right:27px;top:329px">78468</span>
<span class="c" style="top:348px">外盘</span><span class="re" style="right:143px;top:348px">42459</span><span class="c" style="top:348px;left:1781px">内盘</span><span class="gr" style="right:27px;top:348px">36009</span>
<span class="c" style="top:369px">换手</span><span class="w" style="right:143px;top:369px">6.97%</span><span class="c" style="top:369px;left:1781px">股本</span><span class="w" style="right:27px;top:369px">1.27<small>亿</small></span>
<span class="c" style="top:388px">净资</span><span class="w" style="right:143px;top:388px">4.62</span><span class="c" style="top:388px;left:1781px">流通</span><span class="w" style="right:27px;top:388px">1.13<small>亿</small></span>
<span class="c" style="top:407px;letter-spacing:-.8px">收益(三)</span><span class="w" style="right:143px;top:407px">0.340</span><span class="c" style="top:407px;left:1781px">PE(动)</span><span class="w" style="right:27px;top:407px">56.7</span>
<span class="c" style="top:430px">交易状态: 闭市阶段</span>
<span class="c" style="top:451px">净流入额</span><span class="re" style="right:65px;top:451px">1666<small>万</small></span><span class="re" style="right:27px;top:451px">8%</span>
<span class="c" style="top:470px">大宗流入</span><span class="re" style="right:65px;top:470px">630.3<small>万</small></span><span class="re" style="right:27px;top:470px">3%</span>
</div>
<div class="k">
<span class="a1" style="top:492px">14:55</span><span class="a2" style="top:492px">25.82</span><span class="a3" style="top:492px">31</span><span class="a4" style="top:492px">B</span><span class="a6" style="top:492px">7</span>
<span class="a1" style="top:510px">14:55</span><span class="a2" style="top:510px">25.81</span><span class="a3" style="top:510px">5</span><span class="a5" style="top:510px">S</span><span class="a6" style="top:510px">2</span>
<span class="a1" style="top:528px">14:55</span><span class="a2" style="top:528px">25.85</span><span class="a3" style="top:528px">108</span><span class="a4" style="top:528px">B</span><span class="a6" style="top:528px">15</span>
<span class="a1" style="top:546px">14:56</span><span class="a2" style="top:546px">25.84</span><span class="a3" style="top:546px">112</span><span class="a6" style="top:546px">26</span>
<span class="a1" style="top:564px">14:56</span><span class="a2" style="top:564px">25.86</span><span class="a3" style="top:564px">13</span><span class="a4" style="top:564px">B</span><span class="a6" style="top:564px">13</span>
<span class="a1" style="top:582px">14:56</span><span class="a2" style="top:582px">25.85</span><span class="a3" style="top:582px">42</span><span class="a5" style="top:582px">S</span><span class="a6" style="top:582px">25</span>
<span class="a1" style="top:600px">14:56</span><span class="a2" style="top:600px">25.88</span><span class="a3" style="top:600px">44</span><span class="a4" style="top:600px">B</span><span class="a6" style="top:600px">23</span>
<span class="a1" style="top:618px">14:56</span><span class="a2" style="top:618px">25.88</span><span class="a3" style="top:618px">45</span><span class="a4" style="top:618px">B</span><span class="a6" style="top:618px">13</span>
<span class="a1" style="top:636px">14:56</span><span class="a2" style="top:636px">25.84</span><span class="a3" style="top:636px">29</span><span class="a5" style="top:636px">S</span><span class="a6" style="top:636px">9</span>
<span class="a1" style="top:654px">14:56</span><span class="a2" style="top:654px">25.84</span><span class="a3" style="top:654px">47</span><span class="a4" style="top:654px">B</span><span class="a6" style="top:654px">25</span>
<span class="a1" style="top:672px">14:56</span><span class="a2" style="top:672px">25.84</span><span class="a3" style="top:672px">1</span><span class="a5" style="top:672px">S</span><span class="a6" style="top:672px">1</span>
<span class="a1" style="top:690px">14:56</span><span class="a2" style="top:690px">25.88</span><span class="a3" style="top:690px">3</span><span class="a4" style="top:690px">B</span><span class="a6" style="top:690px">1</span>
<span class="a1" style="top:708px">14:56</span><span class="a2" style="top:708px">25.87</span><span class="a3" style="top:708px">11</span><span class="a4" style="top:708px">B</span><span class="a6" style="top:708px">2</span>
<span class="a1" style="top:726px">14:56</span><span class="a2" style="top:726px">25.88</span><span class="a3" style="top:726px">83</span><span class="a4" style="top:726px">B</span><span class="a6" style="top:726px">11</span>
<span class="a1" style="top:744px">14:56</span><span class="a2" style="top:744px">25.88</span><span class="a3" style="top:744px">20</span><span class="a5" style="top:744px">S</span><span class="a6" style="top:744px">4</span>
<span class="a1" style="top:762px">14:56</span><span class="a2" style="top:762px">25.84</span><span class="a3" style="top:762px">48</span><span class="a5" style="top:762px">S</span><span class="a6" style="top:762px">4</span>
<span class="a1" style="top:780px">14:56</span><span class="a2" style="top:780px">25.89</span><span class="a3" style="top:780px">89</span><span class="a4" style="top:780px">B</span><span class="a6" style="top:780px">8</span>
<span class="a1" style="top:798px">14:56</span><span class="a2" style="top:798px">25.85</span><span class="a3" style="top:798px">7</span><span class="a5" style="top:798px">S</span><span class="a6" style="top:798px">4</span>
<span class="a1" style="top:816px">14:56</span><span class="a2" style="top:816px">25.86</span><span class="a3" style="top:816px">64</span><span class="a4" style="top:816px">B</span><span class="a6" style="top:816px">3</span>
<span class="a1" style="top:834px">14:56</span><span class="a2" style="top:834px">25.86</span><span class="a3" style="top:834px">11</span><span class="a4" style="top:834px">B</span><span class="a6" style="top:834px">4</span>
<span class="a1" style="top:852px">14:56</span><span class="a2" style="top:852px">25.85</span><span class="a3" style="top:852px">23</span><span class="a5" style="top:852px">S</span><span class="a6" style="top:852px">4</span>
<span class="a1" style="top:870px">14:56</span><span class="a2" style="top:870px">25.85</span><span class="a3" style="top:870px">13</span><span class="a5" style="top:870px">S</span><span class="a6" style="top:870px">2</span>
<span class="a1" style="top:888px">14:56</span><span class="a2" style="top:888px">25.85</span><span class="a3" style="top:888px">7</span><span class="a4" style="top:888px">B</span><span class="a6" style="top:888px">4</span>
<span class="a1" style="top:906px">14:57</span><span class="a2" style="top:906px">25.84</span><span class="a3" style="top:906px">2</span><span class="a5" style="top:906px">S</span><span class="a6" style="top:906px">1</span>
<span class="a1" style="top:924px">14:57</span><span class="a2" style="top:924px">25.85</span><span class="a3" style="top:924px">11</span><span class="a4" style="top:924px">B</span><span class="a6" style="top:924px">3</span>
<span class="a1" style="top:942px">15:00</span><span class="a2" style="top:942px">25.83</span><span class="a3" style="top:942px;color:#c000c0">655</span><span class="a6" style="top:942px">90</span>
</div>
<div class="sd">
<span style="top:219px;font-size:9px;font-weight:700;color:#0d4aa0">F10</span>
<span style="top:288px;font-size:9px;font-weight:700;color:#0d4aa0">F12</span>
<span style="top:311px;font-size:11px;font-style:italic;color:#208070">fx</span>
<span style="top:387px;font-size:11px;font-weight:700;color:#3b3fb0">RSI</span>
<span style="top:410px;font-size:15px;font-weight:700;color:#c03030">S</span>
<span style="top:488px;font-size:9px;font-weight:700;color:#0d4aa0">FS</span>
<span style="top:533px;font-size:12px">1</span><span style="top:555px;font-size:12px">5</span><span style="top:579px;font-size:12px">15</span><span style="top:602px;font-size:12px">30</span><span style="top:625px;font-size:12px">60</span>
<span style="top:649px">日</span><span style="top:671px">周</span><span style="top:694px">月</span><span style="top:717px;font-size:12px">N</span><span style="top:740px">多</span><span style="top:764px">季</span><span style="top:786px">年</span>
</div>
</div>
</body></html>
